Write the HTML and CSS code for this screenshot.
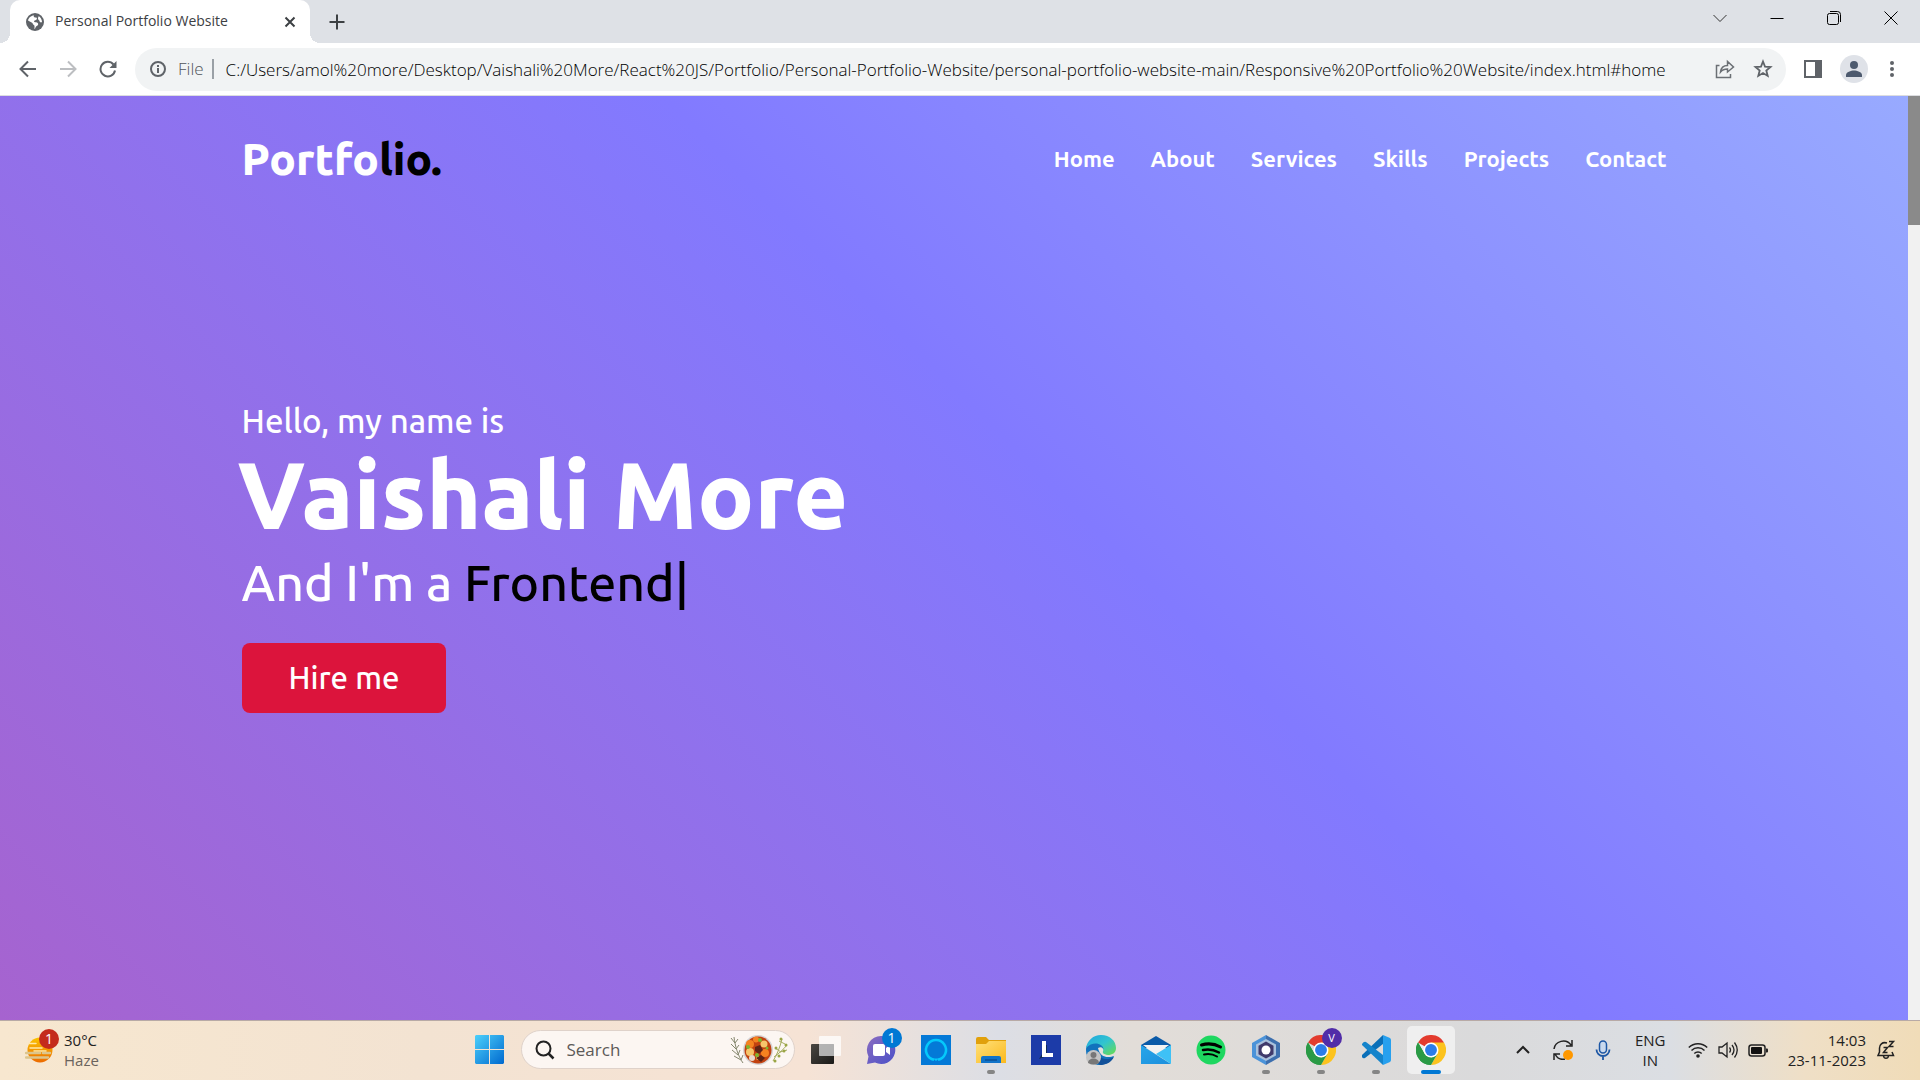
FILE: index.html
```html
<!DOCTYPE html>
<html lang="en">
<head>
<meta charset="utf-8">
<title>Personal Portfolio Website</title>
<link rel="stylesheet" href="styles.css">
</head>
<body>
<svg class="defs" aria-hidden="true">
  <defs>
    <linearGradient id="win" x1="0" y1="0" x2="1" y2="1"><stop offset="0" stop-color="#4cd0fb"/><stop offset="1" stop-color="#0069cf"/></linearGradient>
    <linearGradient id="sun" x1="0" y1="0" x2="0" y2="1"><stop offset="0" stop-color="#fbc400"/><stop offset="1" stop-color="#ec6a00"/></linearGradient>
    <linearGradient id="dark" x1="0" y1="0" x2="1" y2="1"><stop offset="0" stop-color="#4a4742"/><stop offset="1" stop-color="#1b1a18"/></linearGradient>
    <linearGradient id="chat" x1="0" y1="0" x2="1" y2="1"><stop offset="0" stop-color="#8a6cc0"/><stop offset="1" stop-color="#4b50c8"/></linearGradient>
    <linearGradient id="folder" x1="0" y1="0" x2="1" y2="1"><stop offset="0" stop-color="#ffe07a"/><stop offset="1" stop-color="#fbb91d"/></linearGradient>
    <linearGradient id="edgeTop" x1="0" y1="0" x2="1" y2="1"><stop offset="0" stop-color="#1fa5e0"/><stop offset=".5" stop-color="#32c4cf"/><stop offset="1" stop-color="#6ade4a"/></linearGradient>
    <linearGradient id="mail" x1="0" y1="0" x2="1" y2="1"><stop offset="0" stop-color="#27a6ea"/><stop offset="1" stop-color="#1d8fdc"/></linearGradient>
    <symbol id="chrome" viewBox="0 0 48 48">
      <path fill="#e33b2e" d="M24 24 3.2 12A24 24 0 0 1 44.8 12z"/>
      <path fill="#2a9a45" d="M24 24 24 48A24 24 0 0 1 3.2 12L13.600 30z"/>
      <path fill="#fcc31e" d="M24 12H44.800A24 24 0 0 1 24 48L34.400 30z"/>
      <path fill="#2a9a45" d="M3.200 12 13.600 30 24 36 34.400 30 24 48A24 24 0 0 1 3.200 12z"/>
      <circle cx="24" cy="24" r="12" fill="#fff"/><circle cx="24" cy="24" r="9.500" fill="#2b7de9"/>
    </symbol>
  </defs>
</svg>

<header class="browser">
  <div class="titlebar">
    <div class="tab">
      <svg width="18" height="18" viewBox="0 0 18 18"><circle cx="9" cy="9" r="9" fill="#5f6368"/><path fill="#fff" d="M8 2.500c-1 1.500.500 2 2 2s1 2 0 2.500-2 .500-2 1.500 2 .500 3 1 1.500 1.500 1 2.500-2 1-2.500 2.500-.5 1.500-1 1.500V13c0-1-2-1.500-2-3L2 7.500C2.500 5 5 2.500 8 2.500z"/><path fill="#fff" d="M12.500 3c2 1 3.500 3.500 3.500 6-1 1-2.500 0-2.500-1s-1.500-1-1.500-2.500 1-1.500.500-2.500z"/></svg>
      <span class="tab-title">Personal Portfolio Website</span>
      <button class="plain" aria-label="Close tab"><svg width="12" height="12" viewBox="0 0 12 12"><path d="M1.500 1.500l9 9M10.500 1.500l-9 9" stroke="#3c4043" stroke-width="2"/></svg></button>
    </div>
    <button class="plain new-tab" aria-label="New tab"><svg width="16" height="16" viewBox="0 0 16 16"><path d="M8 .5v15M.5 8h15" stroke="#3c4043" stroke-width="2"/></svg></button>
    <div class="window-buttons">
      <button class="plain" aria-label="Search tabs"><svg width="14" height="14" viewBox="0 0 14 14"><path d="M.5 4 7 10.500 13.500 4" fill="none" stroke="#333"/></svg></button>
      <button class="plain" aria-label="Minimise"><svg width="14" height="14" viewBox="0 0 14 14"><path d="M.5 7.500h13" stroke="#000"/></svg></button>
      <button class="plain" aria-label="Restore"><svg width="14" height="14" viewBox="0 0 14 14"><rect x=".5" y="2.500" width="11" height="11" rx="2" fill="none" stroke="#000"/><path d="M3 .5h7.500a3 3 0 0 1 3 3V11" fill="none" stroke="#000"/></svg></button>
      <button class="plain" aria-label="Close"><svg width="14" height="14" viewBox="0 0 14 14"><path d="M.5.5l13 13M13.500.5l-13 13" stroke="#000"/></svg></button>
    </div>
  </div>
  <div class="toolbar">
    <button class="plain" aria-label="Back"><svg width="18" height="18" viewBox="0 0 18 18"><path d="M17 9H2M9 1.500 1.500 9 9 16.500" fill="none" stroke="#5f6368" stroke-width="2"/></svg></button>
    <button class="plain" aria-label="Forward"><svg width="18" height="18" viewBox="0 0 18 18"><path d="M1 9h15M9 1.500 16.500 9 9 16.500" fill="none" stroke="#bcbec1" stroke-width="2"/></svg></button>
    <button class="plain" aria-label="Reload"><svg width="18" height="18" viewBox="0 0 18 18"><path d="M14.500 4.500A7.300 7.300 0 1 0 16 10.500" fill="none" stroke="#5f6368" stroke-width="2"/><path d="M17.500 1v7h-7z" fill="#5f6368"/></svg></button>
    <div class="omnibox">
      <svg width="16" height="16" viewBox="0 0 16 16"><circle cx="8" cy="8" r="7" fill="none" stroke="#5f6368" stroke-width="2"/><path d="M8 7v5M8 4v2" stroke="#5f6368" stroke-width="2"/></svg>
      <label class="scheme" for="address">File</label>
      <input class="address" id="address" type="text" value="C:/Users/amol%20more/Desktop/Vaishali%20More/React%20JS/Portfolio/Personal-Portfolio-Website/personal-portfolio-website-main/Responsive%20Portfolio%20Website/index.html#home">
      <div class="page-actions">
        <button class="plain" aria-label="Share"><svg width="20" height="20" viewBox="0 0 20 20"><path d="M4.500 6.500H1.500v12h14V15M5.500 13c.5-4 3-6.500 7-6.500V2.500L18.500 8l-6 5V10c-3 0-5 .5-7 3z" fill="none" stroke="#6b6f74" stroke-width="1.500"/></svg></button>
        <button class="plain" aria-label="Bookmark"><svg width="20" height="20" viewBox="0 0 20 20"><path d="m10 2.500 2 5.100 5.500.4-4.200 3.500 1.400 5.400L10 14l-4.700 2.900 1.400-5.400L2.500 8l5.500-.4z" fill="none" stroke="#5f6368" stroke-width="1.800"/></svg></button>
      </div>
    </div>
    <div class="page-actions">
      <button class="plain" aria-label="Side panel"><svg width="18" height="18" viewBox="0 0 18 18"><path fill="#5f6368" fill-rule="evenodd" d="M0 0h18v18H0zM2 2v14h9V2z"/></svg></button>
      <button class="plain" aria-label="Profile"><svg width="28" height="28" viewBox="0 0 28 28"><circle cx="14" cy="14" r="14" fill="#dfe2e8"/><circle cx="14" cy="10" r="4" fill="#4d5a6e"/><path fill="#4d5a6e" d="M6 22v-2c0-3 5-4.500 8-4.500s8 1.500 8 4.500v2z"/></svg></button>
    </div>
    <button class="plain" aria-label="Menu"><svg width="4" height="18" viewBox="0 0 4 18"><g fill="#5f6368"><circle cx="2" cy="3" r="2"/><circle cx="2" cy="9" r="2"/><circle cx="2" cy="15" r="2"/></g></svg></button>
  </div>
</header>

<div class="viewport">
  <main class="page">
    <div class="nav wrap">
      <a class="logo" href="#home">Portfo<span class="ink">lio.</span></a>
      <nav class="menu">
        <a href="#home">Home</a><a href="#about">About</a><a href="#services">Services</a><a href="#skills">Skills</a><a href="#projects">Projects</a><a href="#contact">Contact</a>
      </nav>
    </div>
    <section class="hero wrap" id="home">
      <p class="hello">Hello, my name is</p>
      <h1 class="name">Vaishali More</h1>
      <p class="role">And I'm a <span class="ink">Frontend|</span></p>
      <a class="hire" href="#contact">Hire me</a>
    </section>
  </main>
  <div class="scrollbar"><div class="thumb"></div></div>
</div>

<footer class="taskbar">
  <div class="weather">
    <div class="haze">
      <svg width="28" height="26" viewBox="0 0 28 26"><circle cx="15" cy="13" r="12.500" fill="url(#sun)"/><path d="M4 6.500h7M5 11h12M9 14h12" stroke="#ffe9a8" stroke-width="1.500" stroke-linecap="round"/><path d="M1 16h14M18 16h7M1 20.500h22" stroke="#dcc58c" stroke-width="2.500" stroke-linecap="round"/></svg>
      <span class="count alert">1</span>
    </div>
    <div class="lines"><span>30°C</span><span class="muted">Haze</span></div>
  </div>

  <div class="apps">
    <button class="app" aria-label="Start"><svg width="29" height="29" viewBox="0 0 29 29"><path fill="url(#win)" d="M1 0h13v14H0V1zM15 0h13l1 1v13H15zM0 15h14v14H1l-1-1zM15 15h14v13l-1 1H15z"/></svg></button>
    <div class="search">
      <svg width="20" height="20" viewBox="0 0 20 20"><circle cx="8.500" cy="8.500" r="7" fill="none" stroke="#222" stroke-width="2"/><path d="m13.500 13.500 5 5" stroke="#222" stroke-width="2.500"/></svg>
      <input type="text" placeholder="Search" aria-label="Search">
      <svg width="58" height="32" viewBox="0 0 58 32">
        <g fill="none" stroke="#85876e"><path d="M4 3c1 9 4 19 9 26"/><path d="M1 4l4 5 3-4M1 10l5 5 3-4M2 16l6 5 2-5M4 22l7 4 2-5"/></g>
        <g fill="none" stroke="#a5ad60"><path d="M52 5c-2 8-5 16-9 22M57 11c-4 5-9 9-13 12M49 7l6 3M45 14l6 4M57 16l-7 2"/></g>
        <g fill="#9aa545"><circle cx="51" cy="5" r="1.500"/><circle cx="56" cy="11" r="1.500"/><circle cx="46" cy="14" r="1.500"/><circle cx="54" cy="17" r="1.500"/><circle cx="49" cy="22" r="1.500"/><circle cx="45" cy="27" r="1.500"/></g>
        <circle cx="28" cy="16" r="15" fill="#d5d3d4"/><circle cx="28" cy="16" r="13.500" fill="#c24210"/>
        <g fill="#f58220"><circle cx="20" cy="10" r="4"/><circle cx="35" cy="19" r="4"/><circle cx="26" cy="5.500" r="3"/></g>
        <g fill="#f6c56b"><circle cx="20" cy="18" r="4"/><circle cx="34" cy="10" r="3.500"/><circle cx="28" cy="24" r="2"/></g>
        <g fill="#5e2415"><path d="m25 13 5-2 3 5-4 4-4-3zM26 24l5-3 4 3-4 4z"/></g>
        <g fill="#7fb52e"><circle cx="30" cy="6" r="2"/><circle cx="18" cy="13" r="2"/><circle cx="27" cy="21" r="2"/><circle cx="37" cy="14" r="1.500"/></g>
        <circle cx="22" cy="24" r="3" fill="#ead8cc"/>
      </svg>
    </div>
    <button class="app" aria-label="Task view"><svg width="30" height="30" viewBox="0 0 30 30"><rect y="9" width="23" height="20" rx="1" fill="url(#dark)"/><rect x="8" y="1" width="22" height="20" rx="1" fill="#fff" fill-opacity=".75"/><rect x="8" y="9" width="15" height="12" fill="#999" fill-opacity=".5"/></svg></button>
    <button class="app" aria-label="Chat"><svg width="30" height="30" viewBox="0 0 30 30"><path fill="url(#chat)" d="M15 1a14 14 0 1 1-6 26.500L1 29l1.500-7.500A14 14 0 0 1 15 1z"/><rect x="7" y="9" width="12" height="12" rx="2" fill="#fff"/><path fill="#fff" d="m20 13 4-3v10l-4-3z"/></svg><span class="count info">1</span></button>
    <button class="app" aria-label="Alexa"><svg width="30" height="30" viewBox="0 0 30 30"><path fill="#0479d7" d="M0 0h30v30H0z"/><path d="M13 24.800a10 10 0 1 1 4 0" fill="none" stroke="#05c8fb" stroke-width="2.500"/><path d="m12 23.500 3 2.500 3-2.500" fill="#05c8fb"/></svg></button>
    <button class="app open" aria-label="File Explorer"><svg width="30" height="30" viewBox="0 0 30 30"><path fill="#e1a00b" d="M0 4q0-2 2-2h8l3 3h17v5H0z"/><path fill="url(#folder)" d="M0 9h10l3-3h17v22H0z"/><path fill="#1173c9" d="M5 28v-5q0-2 2-2h16q2 0 2 2v5z"/><path d="M9 25h12" stroke="#0b4f94" stroke-width="1.500"/></svg></button>
    <button class="app" aria-label="L app"><svg width="30" height="30" viewBox="0 0 30 30"><path fill="#1c3ba8" d="M0 0h30v30H0z"/><path fill="#0f2b55" d="m8 24 3-5v-9h5v11z"/><path fill="#fff" d="M11 6h4v12h7v4H11z"/></svg></button>
    <button class="app" aria-label="Edge"><svg width="30" height="30" viewBox="0 0 30 30"><path fill="#1172bd" d="M0 15C0 7 7 6 12 7c6 1 8 7 4 9-3 2 0 7 12 5-3 7-10 9-15 9C6 30 0 24 0 15z"/><path fill="url(#edgeTop)" d="M0 13A15 15 0 0 1 15 0c9 0 15 6 15 13 0 5-4 7-8 7-5 0-7-2-5-4C20 10 8 4 0 13z"/><path fill="#12519a" d="M14 30c-5-3-6-9-2-13 1 7 8 9 16 5-3 6-9 8-14 8z"/><path fill="#e6e2dd" d="M12 13c3-2 6 0 5 3-1 2 1 5 11 4.500-5 3-14 2.500-16-7.500z"/><circle cx="7.500" cy="22.500" r="7.500" fill="#c4c4c4"/><circle cx="7.500" cy="20" r="3" fill="#777"/><path fill="#777" d="M2 28c0-6 11-6 11 0q-5 3-11 0z"/></svg></button>
    <button class="app" aria-label="Mail"><svg width="30" height="30" viewBox="0 0 30 30"><path fill="#0a5aa8" d="M0 10 15 1l15 9v3H0z"/><path fill="#f2f2f2" d="M2 10h26L15 20z"/><path fill="url(#mail)" d="M0 10l30 19H0z"/><path fill="#3ec1f6" d="M30 10v19L15 19z"/></svg></button>
    <button class="app" aria-label="Spotify"><svg width="30" height="30" viewBox="0 0 30 30"><circle cx="15" cy="15" r="14.500" fill="#1ed760"/><path d="M5.500 10q10-3 19 2" fill="none" stroke="#000" stroke-width="3" stroke-linecap="round"/><path d="M7 15q8-2 16 2.500" fill="none" stroke="#000" stroke-width="2.500" stroke-linecap="round"/><path d="M8 19.500q7-1.500 13 2" fill="none" stroke="#000" stroke-width="2" stroke-linecap="round"/></svg></button>
    <button class="app open" aria-label="Hexagon app"><svg width="30" height="30" viewBox="0 0 30 30"><path fill="#4b93d9" d="M15 0 1 8v14l14 8z"/><path fill="#3d6fae" d="m15 0 14 8v14l-14 8z"/><path fill="#a9c1dc" d="m15 4 10 5.500v11L15 26 5 20.500v-11z"/><path fill="#403a6b" d="m15 6.500 7.500 4.300v8.500L15 23.500l-7.500-4.200v-8.500z"/><circle cx="15" cy="15" r="4.500" fill="#fff"/></svg></button>
    <button class="app open" aria-label="Chrome, profile V"><svg width="30" height="30"><use href="#chrome"/></svg><span class="count profile">V</span></button>
    <button class="app open" aria-label="Visual Studio Code"><svg width="30" height="30" viewBox="0 0 30 30"><path fill="#0a6fb8" d="m1 20 21-20v9L4 23q-2 1-3-1z"/><path fill="#1584cb" d="M1 10v-1q2-3 4-2l17 13v10z"/><path fill="#27a0ee" d="m22 0 7 3q1 1 1 2v20q0 1-1 2l-7 3z"/></svg></button>
    <button class="app active" aria-label="Chrome"><svg width="30" height="30"><use href="#chrome"/></svg></button>
  </div>

  <div class="tray">
    <button class="plain" aria-label="Hidden icons"><svg width="20" height="20" viewBox="0 0 20 20"><path d="m4 13 6-6 6 6" fill="none" stroke="#222" stroke-width="2"/></svg></button>
    <button class="plain" aria-label="Updates"><svg width="20" height="20" viewBox="0 0 20 20"><path d="M1 9C2 1 13-2 18 5M19 0v6h-6M12 19C8 20 4 18 2 14M1 20v-6h6" fill="none" stroke="#222" stroke-width="1.500"/><circle cx="15" cy="15" r="5" fill="#ff9800"/></svg></button>
    <button class="plain" aria-label="Microphone"><svg width="20" height="20" viewBox="0 0 20 20"><rect x="6.500" y="1" width="7" height="12" rx="3.500" fill="#c9d9ee" stroke="#1d57a5" stroke-width="1.500"/><path d="M3.500 9.500a6.500 6.500 0 0 0 13 0M10 16v4" fill="none" stroke="#1d57a5" stroke-width="1.800"/></svg></button>
    <div class="lines language"><span>ENG</span><span>IN</span></div>
    <div class="status">
      <svg width="20" height="20" viewBox="0 0 20 20"><path d="M.8 7.500a13 13 0 0 1 18.400 0M3.500 10.500a9.200 9.200 0 0 1 13 0M6.300 13.500a5.200 5.200 0 0 1 7.400 0" fill="none" stroke="#222" stroke-width="1.500"/><circle cx="10" cy="16" r="1.800" fill="#222"/></svg>
      <svg width="20" height="20" viewBox="0 0 20 20"><path d="M1 7h3l5-4v14l-5-4H1zM11.500 7.500q2 2.500 0 5M14 5q4 5 0 10M16.500 2.500q5.500 7.500 0 15" fill="none" stroke="#222" stroke-width="1.300"/></svg>
      <svg width="20" height="20" viewBox="0 0 20 20"><rect x="1" y="5" width="16" height="11" rx="2.500" fill="none" stroke="#222" stroke-width="1.500"/><rect x="3" y="7" width="11" height="7" rx="1" fill="#111"/><path d="M18 8.500h1a1 1 0 0 1 1 1v2a1 1 0 0 1-1 1h-1z" fill="#222"/></svg>
    </div>
    <div class="clock">
      <div class="lines end"><span>14:03</span><span>23-11-2023</span></div>
      <svg width="20" height="20" viewBox="0 0 20 20"><path d="M11 3C6 1.500 3.500 5 3.500 8v4L2 15.500h15.500L16 12M7.500 16c.5 3 4.500 3 5 0" fill="none" stroke="#222" stroke-width="1.500"/><path d="M7.500 7.500h4l-4 5h4M13 1.500h4.500l-4.500 5h4.500" fill="none" stroke="#222" stroke-width="1.500"/></svg>
    </div>
  </div>
</footer>
</body>
</html>
```
FILE: styles.css
```css
* { box-sizing: border-box; }
body {
  margin: 0;
  min-height: 100vh;
  display: flex;
  flex-direction: column;
  font-family: "Segoe UI", "Open Sans", sans-serif;
  font-size: 14px;
  color: #222;
}
a { color: inherit; text-decoration: none; }
p, h1 { margin: 0; }
svg { display: block; flex: none; }
.defs { position: absolute; width: 0; height: 0; }
input { border: 0; padding: 0; background: none; font: inherit; color: inherit; outline: 0; min-width: 0; }
button { font: inherit; border: 0; background: none; padding: 0; }
.plain { display: flex; align-items: center; justify-content: center; flex: none; }

/* Browser frame */
.titlebar { display: flex; align-items: center; height: 43px; padding-left: 10px; background: #dee1e6; }
.tab {
  position: relative;
  display: flex;
  align-items: center;
  gap: 11px;
  width: 300px;
  height: 43px;
  padding: 0 14px 0 16px;
  border-radius: 10px 10px 0 0;
  background: #fff;
  color: #3c4043;
}
.tab::before, .tab::after {
  content: "";
  position: absolute;
  bottom: 0;
  width: 10px;
  height: 10px;
}
.tab::before { left: -10px; background: radial-gradient(circle at 0 0, #dee1e6 10px, #fff 10px); }
.tab::after { right: -10px; background: radial-gradient(circle at 100% 0, #dee1e6 10px, #fff 10px); }
.tab-title { flex: 1; white-space: nowrap; padding-bottom: 2px; }
.new-tab { margin-left: 19px; }
.window-buttons { display: flex; gap: 43px; margin-left: auto; padding: 0 22px 7px 0; }
.toolbar {
  display: flex;
  align-items: center;
  gap: 22px;
  height: 53px;
  padding: 0 26px 0 19px;
  border-bottom: 1px solid #dcdde0;
  background: #fff;
}
.omnibox {
  flex: 1;
  display: flex;
  align-items: center;
  gap: 12px;
  height: 43px;
  padding: 0 13px 0 15px;
  margin: 0 -4px;
  border-radius: 22px;
  background: #f1f3f4;
  font-size: 17px;
  font-weight: 300;
}
.scheme { padding-right: 8px; border-right: 2px solid #9aa0a6; line-height: 20px; color: #50545a; }
.address { flex: 1; color: #000; }
.page-actions { display: flex; align-items: center; gap: 18px; }

/* Portfolio page */
.viewport { flex: 1; display: flex; }
.page {
  flex: 1;
  display: flex;
  flex-direction: column;
  background: linear-gradient(45deg, #a663cf 0%, #827aff 56%, #98aaff 100%);
  font-family: "Ubuntu", "Noto Sans", sans-serif;
  font-weight: 500;
  color: #fff;
}
.wrap { width: 100%; max-width: 1625px; margin: 0 auto; padding: 0 100px; }
.ink { color: #000; }
.nav { display: flex; align-items: center; justify-content: space-between; height: 124px; }
.logo { font-size: 44px; font-weight: 800; }
.menu { display: flex; gap: 36px; font-size: 22px; font-weight: 600; }
.hero { flex: 1; display: flex; flex-direction: column; align-items: flex-start; justify-content: center; padding-bottom: 126px; }
.hello { font-size: 33px; line-height: 38px; }
.name { margin-left: -4px; font-size: 94px; font-weight: 800; line-height: 108px; }
.role { font-size: 50px; line-height: 60px; margin-top: 4px; }
.hire { margin-top: 31px; padding: 0 47px; border-radius: 8px; background: #dc143c; font-size: 31px; line-height: 70px; }
.scrollbar { width: 12px; background: #f1f1f1; }
.thumb { height: 129px; background: #8a8a8a; }

/* Taskbar */
.taskbar {
  display: grid;
  grid-template-columns: 1fr auto 1fr;
  align-items: center;
  height: 60px;
  padding-bottom: 2px;
  border-top: 1px solid #b8aaa6;
  background: linear-gradient(90deg, #f7e7cf 0%, #f3e3d2 22%, #f6e3d5 42%, #dcdee5 52%, #e2ddd8 59%, #dadadb 77%, #dbdee3 87%, #efdfc6 94%, #f0dcb8 100%);
}
.weather { display: flex; align-items: center; gap: 11px; padding-left: 25px; }
.haze, .app { position: relative; }
.lines { display: flex; flex-direction: column; font-size: 15px; line-height: 20px; white-space: nowrap; }
.muted { color: #6a635c; }
.count {
  position: absolute;
  width: 20px;
  height: 20px;
  border-radius: 50%;
  line-height: 20px;
  text-align: center;
  color: #fff;
}
.alert { top: -8px; right: -6px; background: #c42b1c; }
.info { top: 2px; right: 7px; background: #0078d4; }
.profile { top: 2px; right: 7px; background: #512da8; font-size: 11px; }
.apps { display: flex; align-items: center; }
.app { display: flex; align-items: center; justify-content: center; width: 55px; height: 48px; }
.search {
  display: flex;
  align-items: center;
  gap: 12px;
  width: 274px;
  height: 39px;
  margin: 0 4px;
  padding: 0 6px 0 13px;
  border: 1px solid #dfd2ca;
  border-radius: 20px;
  background: #fcf6f2;
  font-size: 17px;
}
.search input { flex: 1; }
.search input::placeholder { color: #5d5a58; opacity: 1; }
.open::after, .active::after {
  content: "";
  position: absolute;
  bottom: 0;
  width: 8px;
  height: 4px;
  border-radius: 2px;
  background: #858585;
}
.active { background: #efefef; width: 48px; margin: 0 4px 0 3px; border-radius: 5px; }
.active::after { width: 20px; background: #0078d4; }
.tray { display: flex; align-items: center; justify-content: flex-end; gap: 20px; padding-right: 24px; }
.language { width: 35px; align-items: center; }
.status, .clock { display: flex; align-items: center; gap: 10px; }
.end { align-items: flex-end; }
```
